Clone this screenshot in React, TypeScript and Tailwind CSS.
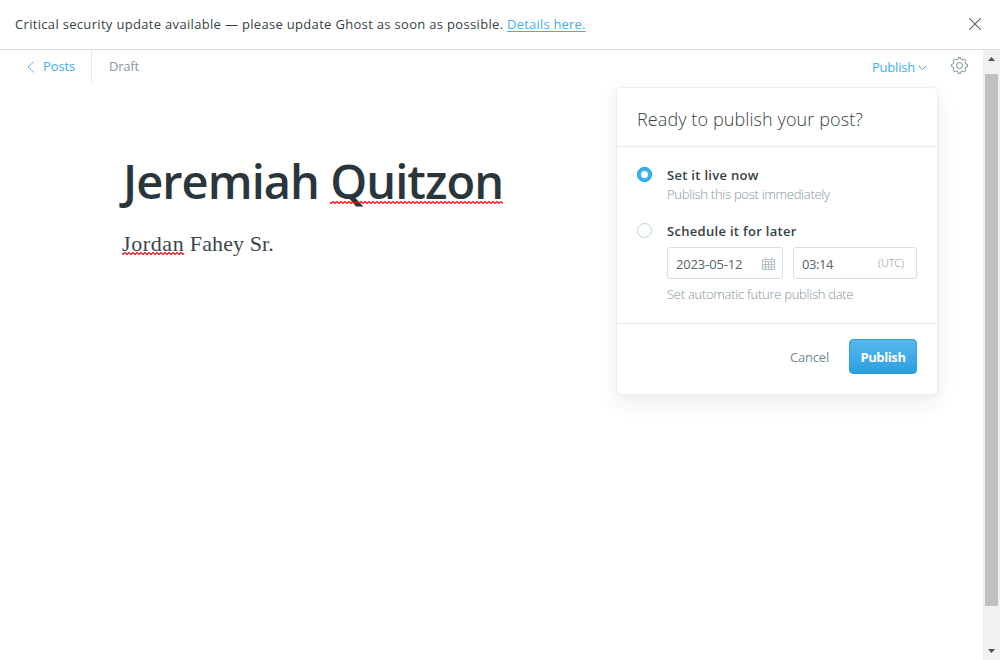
import type { ReactNode } from "react";

function Squiggle({ id, className }: { id: string; className: string }) {
  return (
    <svg className={`absolute left-0 h-[3px] w-full ${className}`} aria-hidden="true">
      <defs>
        <pattern id={id} width="4" height="3" patternUnits="userSpaceOnUse">
          <path d="M-1 .5 1 2.500 3 .5 5 2.500" fill="none" stroke="#f00" strokeWidth="1.100" />
        </pattern>
      </defs>
      <rect width="100%" height="3" fill={`url(#${id})`} />
    </svg>
  );
}

function polar(radius: number, degrees: number) {
  const angle = (degrees * Math.PI) / 180;
  return `${(12 + radius * Math.sin(angle)).toFixed(2)} ${(12 - radius * Math.cos(angle)).toFixed(2)}`;
}

// Eight teeth joined by concave arcs.
const gearPath =
  `M${polar(11.3, -9)}` +
  Array.from({ length: 8 }, (_, i) => `L${polar(11.3, i * 45 + 9)}A2.7 2.7 0 0 0 ${polar(11.3, i * 45 + 36)}`).join("") +
  "Z";

function Gear() {
  return (
    <svg className="size-[17px]" viewBox="0 0 24 24" fill="none" stroke="#738a94" strokeWidth="1.4" strokeLinejoin="round" aria-hidden="true">
      <circle cx="12" cy="12" r="4.2" />
      <path d={gearPath} />
    </svg>
  );
}

function Calendar() {
  return (
    <svg className="-mr-px h-[13px] w-[13px]" viewBox="0 0 13 13" fill="none" stroke="#b4c1c7" strokeWidth="1" aria-hidden="true">
      <path d="M.5 2.500h12v10H.5zM.5 4.500h12M.5 7.500h12M.5 10h12M3.500 5v7.500M6.500 5v7.500M9.500 5v7.500M3.500 0v3M9.500 0v3" />
    </svg>
  );
}

function Option({ checked, title, children }: { checked?: boolean; title: string; children: ReactNode }) {
  return (
    <div className="flex">
      <span
        className={
          checked
            ? "mr-[15px] size-[15px] shrink-0 rounded-full border-[4px] border-[#3eb0ef] bg-white outline outline-1 -outline-offset-1 outline-[#2b9fde]"
            : "mr-[15px] size-[15px] shrink-0 rounded-full border border-[#b9d5e5] bg-white"
        }
      />
      <div className="flex-1">
        <div className="h-[18px] text-[13px] leading-[16px] font-semibold tracking-[0.3px] text-[#343f44]">{title}</div>
        {children}
      </div>
    </div>
  );
}

function PublishMenu() {
  return (
    <div className="absolute top-[37px] left-[616px] h-[308px] w-[322px] rounded-[5px] border border-[#eceff1] bg-white shadow-[0_8px_20px_rgba(39,44,49,0.08),0_1px_6px_rgba(39,44,49,0.03)]">
      <div className="flex h-[59px] items-center border-b border-[#e3ecf1] px-5">
        <h3 className="pt-[4px] text-[18px] font-[350] tracking-[0.1px] text-[#343f44]">Ready to publish your post?</h3>
      </div>
      <div className="flex h-[177px] flex-col border-b border-[#e3ecf1] px-5 pt-5">
        <div className="h-14">
          <Option checked title="Set it live now">
            <p className="-mt-px text-[13px] leading-[20px] font-[350] tracking-[-0.27px] text-[#82949d]">Publish this post immediately</p>
          </Option>
        </div>
        <Option title="Schedule it for later">
          <div className="mt-[6px] flex gap-[10px]">
            <div className="flex h-8 w-[116px] items-center justify-between rounded-[3px] border border-[#d3e0e7] px-2 text-[13px] tracking-[-0.15px] text-[#54656d]">
              <span className="pt-[3px]">2023-05-12</span>
              <Calendar />
            </div>
            <div className="flex h-8 w-[124px] items-center justify-between rounded-[3px] border border-[#d3e0e7] pr-3 pl-2 text-[13px] tracking-[-0.4px] text-[#54656d]">
              <span className="pt-[3px]">03:14</span>
              <span className="text-[11px] font-light tracking-[-0.1px] text-[#82949d]">(UTC)</span>
            </div>
          </div>
          <p className="mt-[5px] text-[13px] leading-[20px] font-[350] tracking-[-0.27px] text-[#82949d]">Set automatic future publish date</p>
        </Option>
      </div>
      <div className="flex h-[66px] items-center justify-end px-5">
        <button className="mr-5 pt-[2px] text-[13px] tracking-[-0.2px] text-[#738a94]">Cancel</button>
        <button className="-mt-[2px] h-[35px] w-[68px] rounded-[4px] border border-[#2f9fdc] bg-linear-to-b from-[#55b8ee] to-[#2a9fe0] pt-[3px] text-[13px] font-bold tracking-[-0.4px] text-white">Publish</button>
      </div>
    </div>
  );
}

export default function App() {
  return (
    <div className="flex h-[660px] w-[1000px] flex-col overflow-hidden bg-white font-['Open_Sans',sans-serif]">
      <aside className="flex h-[50px] shrink-0 items-center justify-between border-b border-[#dfdfdf] pr-[19px] pl-[15px] text-[13px] text-[#343f44]">
        <p className="tracking-[0.32px]">
          Critical security update available — please update Ghost as soon as possible. <a className="tracking-[0.2px] text-[#3eb0ef] underline underline-offset-2">Details here.</a>
        </p>
        <svg className="-mt-[2px] size-3" viewBox="0 0 12 12" fill="none" stroke="#555d61" strokeWidth="1.1" aria-hidden="true">
          <path d="M.3.3l11.4 11.4M11.7.3.3 11.7" />
        </svg>
      </aside>
      <div className="flex min-h-0 flex-1">
        <main className="relative w-[983px]">
          <header className="flex h-[34px] items-center justify-between pr-[15px] text-[13px]">
            <div className="flex h-full items-center">
              <a className="flex h-full w-[92px] items-center border-r border-[#e3ecf1] pl-[27px] tracking-[-0.1px] text-[#3eb0ef]">
                <svg className="mr-2 h-3 w-2" viewBox="0 0 8 12" fill="none" stroke="#63bdf0" strokeWidth="1" aria-hidden="true">
                  <path d="M7 .5 1 6l6 5.500" />
                </svg>
                Posts
              </a>
              <span className="pl-[17px] tracking-[-0.2px] text-[#8299a3]">Draft</span>
            </div>
            <div className="flex items-center">
              <button className="flex items-center pt-px tracking-[-0.2px] text-[#3eb0ef]">
                Publish
                <svg className="ml-[3px] h-[6px] w-[9px]" viewBox="0 0 9 6" fill="none" stroke="#4f93b8" strokeWidth="1" aria-hidden="true">
                  <path d="M.5.7l4 4 4-4" />
                </svg>
              </button>
              <span className="-mt-[3px] ml-6"><Gear /></span>
            </div>
          </header>
          <article className="pt-[64px] pl-[123px] text-[#2b363c]">
            <h1 className="h-[66px] text-[47px] leading-[66px] font-semibold tracking-[-0.95px] whitespace-nowrap">
              Jeremiah <span className="relative inline-block">Quitzon<Squiggle id="title-wave" className="top-[53px]" /></span>
            </h1>
            <p className="-ml-px pt-[14px] font-['Liberation_Serif',serif] text-[22px] leading-[32px] tracking-[0.1px] text-[#3a464c]">
              <span className="relative inline-block tracking-[0.6px]">Jordan<Squiggle id="body-wave" className="top-[24px]" /></span> Fahey Sr.
            </p>
          </article>
          <PublishMenu />
        </main>
        <div className="flex w-[17px] flex-col items-center bg-[#f1f1f1]">
          <svg className="h-6 w-[17px] shrink-0" viewBox="0 0 17 24" aria-hidden="true"><path d="M5 11l3.500-4 3.500 4z" fill="#505050" /></svg>
          <div className="h-[532px] w-[13px] bg-[#c1c1c1]" />
          <svg className="mt-auto h-[17px] w-[17px] shrink-0" viewBox="0 0 17 17" aria-hidden="true"><path d="M5 6l3.500 4 3.500-4z" fill="#505050" /></svg>
        </div>
      </div>
    </div>
  );
}
